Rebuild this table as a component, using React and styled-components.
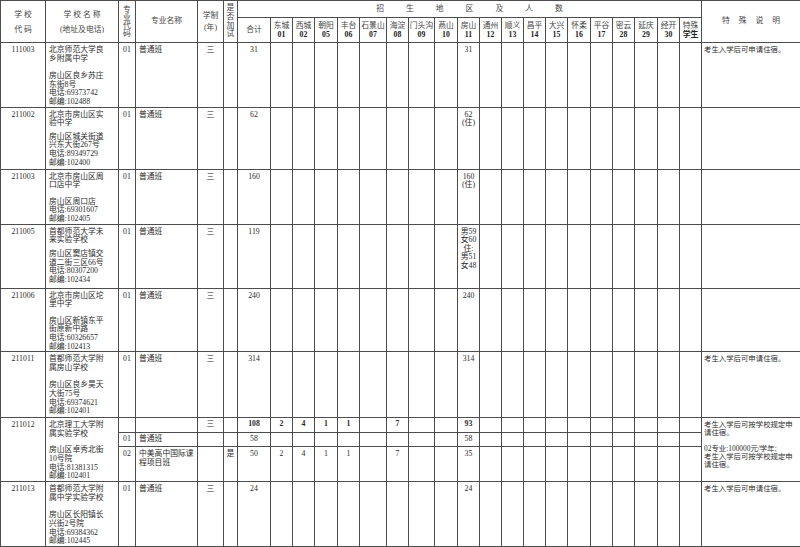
import React from 'react'
import styled, { createGlobalStyle } from 'styled-components'

const GlobalStyle = createGlobalStyle`
  html, body {
    margin: 0;
    padding: 0;
    background: #fff;
    overflow: hidden;
  }
  body {
    font-family: "Liberation Serif", "Noto Sans CJK SC", serif;
    color: #2b2b2b;
  }
`

const Table = styled.table`
  width: 800px;
  table-layout: fixed;
  border-collapse: collapse;
  font-size: 7.8px;
  line-height: 8.6px;
`

const Head = styled.th`
  border: 1px solid #4d4d4d;
  padding: 0;
  font-weight: 400;
  color: #444;
  text-align: center;
  vertical-align: ${p => p.$valign || 'middle'};
  line-height: ${p => p.$lh || '8.6px'};
  letter-spacing: ${p => p.$spacing || '0'};
  padding-left: ${p => p.$spacing || '0'};
  white-space: ${p => (p.$nowrap ? 'nowrap' : 'pre-line')};
  overflow: hidden;
`

const Code = styled.b`
  display: block;
  font-weight: 700;
  color: #222;
`

const Cell = styled.td`
  border: 1px solid #4d4d4d;
  padding: ${p => p.$pad || '3px 0 0'};
  vertical-align: top;
  text-align: ${p => p.$align || 'center'};
  font-weight: ${p => (p.$bold ? 700 : 400)};
  font-size: ${p => p.$size || 'inherit'};
  line-height: ${p => p.$lh || 'inherit'};
  white-space: pre-line;
  overflow: hidden;
`

const NameBlock = styled.div`
  white-space: pre;
`

const AddrBlock = styled.div`
  white-space: pre;
  margin-top: ${p => p.$gap}px;
`

const widths = [45, 73, 17, 62, 26, 14, 33, 22, 22, 23, 22, 27, 22, 26, 23, 22, 22, 22, 22, 22, 23, 22, 22, 23, 22, 22, 99]

const districts = [
  ['东城', '01'], ['西城', '02'], ['朝阳', '05'], ['丰台', '06'], ['石景山', '07'], ['海淀', '08'],
  ['门头沟', '09'], ['燕山', '10'], ['房山', '11'], ['通州', '12'], ['顺义', '13'], ['昌平', '14'],
  ['大兴', '15'], ['怀柔', '16'], ['平谷', '17'], ['密云', '28'], ['延庆', '29'], ['经开', '30'],
]

const schools = [
  {
    code: '111003', name: '北京师范大学良\n乡附属中学', gap: 9,
    addr: '房山区良乡苏庄\n东街8号\n电话:69373742\n邮编:102488',
    note: '考生入学后可申请住宿。',
    majors: [{ h: 64.5, code: '01', name: '普通班', len: '三', total: '31', counts: { 8: '31' } }],
  },
  {
    code: '211002', name: '北京市房山区实\n验中学', gap: 5,
    addr: '房山区城关街道\n兴东大街267号\n电话:89349729\n邮编:102400',
    note: '',
    majors: [{ h: 62, code: '01', name: '普通班', len: '三', total: '62', counts: { 8: '62\n(住)' } }],
  },
  {
    code: '211003', name: '北京市房山区周\n口店中学', gap: 8,
    addr: '房山区周口店\n电话:69301607\n邮编:102405',
    note: '',
    majors: [{ h: 55, code: '01', name: '普通班', len: '三', total: '160', counts: { 8: '160\n(住)' } }],
  },
  {
    code: '211005', name: '首都师范大学未\n来实验学校', gap: 5.5,
    addr: '房山区窦店镇交\n道二街三区66号\n电话:80307200\n邮编:102434',
    note: '',
    majors: [{ h: 64, code: '01', name: '普通班', len: '三', total: '119', counts: { 8: '男59\n女60\n住:\n男51\n女48' } }],
  },
  {
    code: '211006', name: '北京市房山区坨\n里中学', gap: 8,
    addr: '房山区新镇东平\n街原新中路\n电话:60326657\n邮编:102413',
    note: '',
    majors: [{ h: 60, code: '01', name: '普通班', len: '三', total: '240', counts: { 8: '240' } }],
  },
  {
    code: '211011', name: '首都师范大学附\n属房山学校', gap: 9,
    addr: '房山区良乡昊天\n大街75号\n电话:69374621\n邮编:102401',
    note: '考生入学后可申请住宿。',
    majors: [{ h: 66, code: '01', name: '普通班', len: '三', total: '314', counts: { 8: '314' } }],
  },
  {
    code: '211012', name: '北京理工大学附\n属实验学校', gap: 8,
    addr: '房山区卓秀北街\n10号院\n电话:81381315\n邮编:102401',
    note: '考生入学后可按学校规定申\n请住宿。\n\n02专业:100000元/学年;\n考生入学后可按学校规定申\n请住宿。',
    majors: [
      { h: 15, code: '', name: '', len: '三', total: '108', bold: true, counts: { 0: '2', 1: '4', 2: '1', 3: '1', 5: '7', 8: '93' } },
      { h: 14, code: '01', name: '普通班', len: '', total: '58', counts: { 8: '58' } },
      { h: 35, code: '02', name: '中美高中国际课\n程项目班', len: '', test: '是', total: '50', counts: { 0: '2', 1: '4', 2: '1', 3: '1', 5: '7', 8: '35' } },
    ],
  },
  {
    code: '211013', name: '首都师范大学附\n属中学实验学校', gap: 9,
    addr: '房山区长阳镇长\n兴街2号院\n电话:69384362\n邮编:102445',
    note: '考生入学后可申请住宿。',
    majors: [{ h: 64, code: '01', name: '普通班', len: '三', total: '24', counts: { 8: '24' } }],
  },
]

const SchoolRows = ({ school }) => {
  const span = school.majors.length
  return school.majors.map((m, i) => {
    const small = m.h < 20
    const pad = small ? '2px 0 0' : undefined
    return (
      <tr key={i} style={{ height: m.h }}>
        {i === 0 && (
          <>
            <Cell rowSpan={span}>{school.code}</Cell>
            <Cell rowSpan={span} $align="left" $pad="3px 0 0 3px">
              <NameBlock>{school.name}</NameBlock>
              <AddrBlock $gap={school.gap}>{school.addr}</AddrBlock>
            </Cell>
          </>
        )}
        <Cell $pad={pad}>{m.code}</Cell>
        <Cell $align="left" $pad={small ? '2px 0 0 3px' : '3px 0 0 3px'}>{m.name}</Cell>
        <Cell $pad={pad}>{m.len}</Cell>
        <Cell>{m.test || ''}</Cell>
        <Cell $bold={m.bold} $pad={pad}>{m.total}</Cell>
        {Array.from({ length: 19 }).map((_, k) => (
          <Cell key={k} $bold={m.bold} $pad={pad}>{m.counts[k] || ''}</Cell>
        ))}
        {i === 0 && (
          <Cell rowSpan={span} $align="left" $pad="3px 0 0 2px" $size="7.4px" $lh="8px">
            {school.note}
          </Cell>
        )}
      </tr>
    )
  })
}

const App = () => {
  return (
    <>
      <GlobalStyle />
      <Table>
        <colgroup>
          {widths.map((w, i) => (
            <col key={i} style={{ width: w }} />
          ))}
        </colgroup>
        <thead>
          <tr style={{ height: 17 }}>
            <Head rowSpan={2} $lh="15px">{'学 校\n代 码'}</Head>
            <Head rowSpan={2} $lh="15px">{'学 校 名 称\n(地址及电话)'}</Head>
            <Head rowSpan={2} $lh="8px">{'专\n业\n代\n码'}</Head>
            <Head rowSpan={2}>专业名称</Head>
            <Head rowSpan={2} $lh="12px">{'学制\n(年)'}</Head>
            <Head rowSpan={2} $lh="8.7px">{'是\n否\n加\n试'}</Head>
            <Head colSpan={20} $spacing="22px">招生地区及人数</Head>
            <Head rowSpan={2} $spacing="9px">特殊说明</Head>
          </tr>
          <tr style={{ height: 25 }}>
            <Head>合计</Head>
            {districts.map(([n, c]) => (
              <Head key={c} $lh="9px" $nowrap>
                {n}
                <Code>{c}</Code>
              </Head>
            ))}
            <Head $lh="9px" $nowrap>
              特殊
              <Code>学生</Code>
            </Head>
          </tr>
        </thead>
        <tbody>
          {schools.map(s => (
            <SchoolRows key={s.code} school={s} />
          ))}
        </tbody>
      </Table>
    </>
  )
}

export default App
